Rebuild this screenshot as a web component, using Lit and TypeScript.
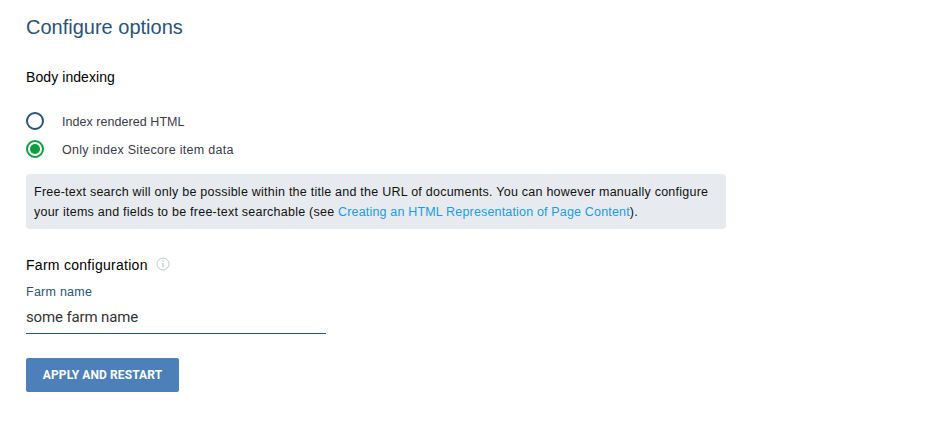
import { LitElement, html, css } from "lit";
import { customElement } from "lit/decorators.js";

@customElement("app-root")
export class AppRoot extends LitElement {
  static styles = css`
    :host {
      display: block;
      width: 945px;
      height: 448px;
      box-sizing: border-box;
      padding: 15px 26px 0;
      background: #fff;
      font-family: "Liberation Sans", Arial, sans-serif;
      overflow: hidden;
    }
    h1 {
      margin: 0;
      font-size: 20px;
      line-height: 24px;
      font-weight: 400;
      color: #2b5278;
    }
    h2 {
      margin: 0;
      font-size: 14px;
      line-height: 18px;
      font-weight: 400;
      color: #000;
    }
    .body-title { margin-top: 29px; letter-spacing: 0.08px; }
    .radios {
      display: flex;
      flex-direction: column;
      gap: 8px;
      margin-top: 25px;
    }
    .radio {
      display: flex;
      align-items: center;
      gap: 18px;
      height: 20px;
      font-size: 12.5px;
      color: #3a3a4a;
    }
    .first { letter-spacing: 0.05px; padding-top: 1px; }
    .second { letter-spacing: 0.29px; padding-top: 1px; }
    .circle {
      box-sizing: border-box;
      width: 18px;
      height: 18px;
      border-radius: 50%;
      border: 2px solid #2b5278;
      display: flex;
      align-items: center;
      justify-content: center;
    }
    .circle.on { border-color: #0c9d3e; }
    .circle.on::after {
      content: "";
      width: 10px;
      height: 10px;
      border-radius: 50%;
      background: #0c9d3e;
    }
    .note {
      box-sizing: border-box;
      width: 700px;
      height: 55px;
      margin-top: 15px;
      padding: 8px 8px;
      background: #e7ebef;
      border-radius: 4px;
      font-size: 12.5px;
      line-height: 20px;
      color: #111;
      letter-spacing: 0.24px;
    }
    a { color: #1a9ce0; text-decoration: none; letter-spacing: 0.17px; }
    .farm-title {
      display: flex;
      align-items: center;
      gap: 8px;
      margin-top: 27px;
      letter-spacing: 0.28px;
    }
    .farm-title svg { display: block; margin-top: -3px; }
    .label {
      margin-top: 10px;
      font-size: 12.5px;
      line-height: 16px;
      color: #2b5278;
      letter-spacing: 0.25px;
    }
    .input {
      box-sizing: border-box;
      width: 300px;
      height: 31px;
      margin-top: 3px;
      padding-top: 2px;
      font-family: Roboto, sans-serif;
      font-size: 15px;
      line-height: 24px;
      letter-spacing: -0.14px;
      color: #333;
      border-bottom: 1px solid #2b5278;
    }
    button {
      display: block;
      width: 153px;
      height: 34px;
      margin-top: 24px;
      padding: 0;
      border: none;
      border-radius: 2px;
      background: #4d80b8;
      color: #fff;
      font-family: Roboto, sans-serif;
      font-size: 12px;
      font-weight: 700;
      letter-spacing: 0.1px;
    }
  `;

  render() {
    return html`
      <h1>Configure options</h1>
      <h2 class="body-title">Body indexing</h2>
      <div class="radios">
        <div class="radio"><span class="circle"></span><span class="first">Index rendered HTML</span></div>
        <div class="radio"><span class="circle on"></span><span class="second">Only index Sitecore item data</span></div>
      </div>
      <div class="note">
        Free-text search will only be possible within the title and the URL of documents. You can however manually configure
        your items and fields to be free-text searchable (see <a>Creating an HTML Representation of Page Content</a>).
      </div>
      <h2 class="farm-title">
        Farm configuration
        <svg width="14" height="14" viewBox="0 0 14 14" fill="none">
          <circle cx="7" cy="7" r="6" stroke="#bfc6ce" stroke-width="1"/>
          <path d="M7 6v4.5" stroke="#bfc6ce" stroke-width="1.2"/>
          <path d="M7 3.5v1.3" stroke="#bfc6ce" stroke-width="1.2"/>
        </svg>
      </h2>
      <div class="label">Farm name</div>
      <div class="input">some farm name</div>
      <button>APPLY AND RESTART</button>
    `;
  }
}
